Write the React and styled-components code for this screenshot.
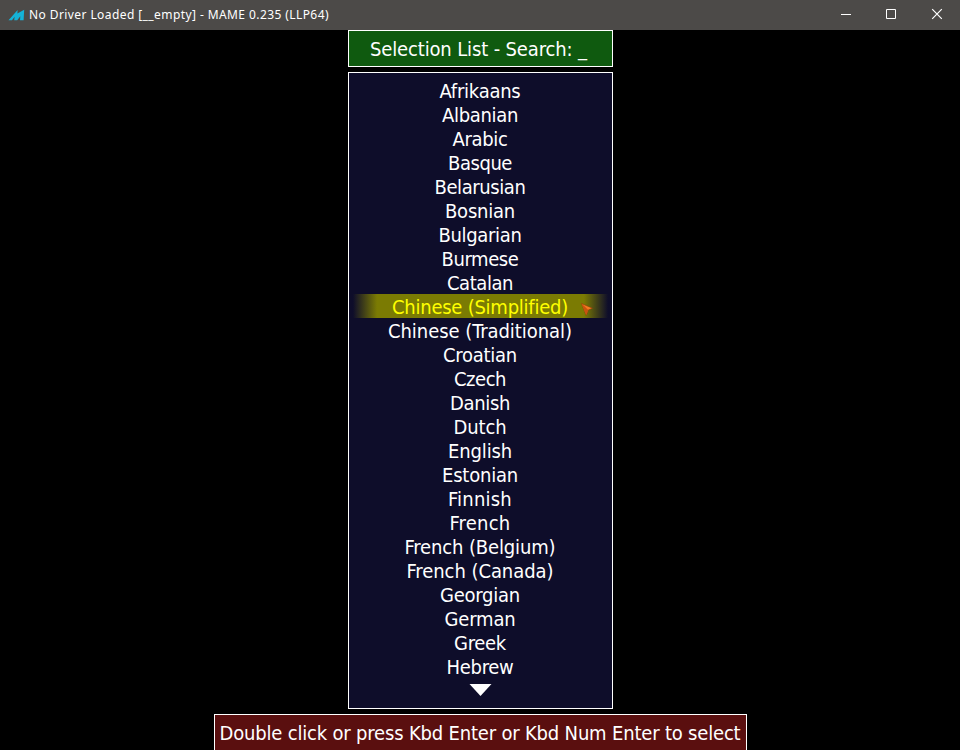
import React, { useLayoutEffect, useRef, useState } from "react";
import styled, { createGlobalStyle } from "styled-components";

const GlobalStyle = createGlobalStyle`
  html, body { margin: 0; padding: 0; background: #000; overflow: hidden; }
  * { box-sizing: border-box; }
`;

const Window = styled.div`
  width: 960px;
  height: 750px;
  background: #000;
  display: flex;
  flex-direction: column;
  overflow: hidden;
  color: #fff;
  font-family: "DejaVu Sans Condensed", "DejaVu Sans", sans-serif;
  font-size: 20px;
  line-height: 24px;
`;

const TitleBar = styled.header`
  height: 30px;
  flex: none;
  display: flex;
  align-items: center;
  background: #4c4a48;
  padding-left: 8px;
`;

const Logo = styled.svg`
  width: 17px;
  height: 14px;
  margin-right: 4px;
  flex: none;
`;

const Title = styled.div`
  flex: 1;
  display: flex;
  font-family: "Noto Sans", "Open Sans", sans-serif;
  font-size: 12px;
  line-height: 30px;
  height: 30px;
`;

const Controls = styled.div`
  display: flex;
`;

const ControlButton = styled.button`
  width: 46px;
  height: 30px;
  padding: 0;
  border: 0;
  background: transparent;
  display: block;
  svg { display: block; }
`;

const Screen = styled.main`
  flex: 1;
  display: flex;
  flex-direction: column;
  align-items: center;
`;

const SearchBox = styled.div`
  width: 265px;
  height: 37px;
  flex: none;
  border: 1px solid #fff;
  background: #0f5a0f;
  display: flex;
  justify-content: center;
  padding-top: 6px;
`;

const ListBox = styled.div`
  width: 265px;
  height: 637px;
  flex: none;
  margin-top: 5px;
  border: 1px solid #fff;
  background: #0e0d2a;
  padding-top: 5px;
  display: flex;
  flex-direction: column;
`;

const Row = styled.div`
  height: 24px;
  flex: none;
  margin: 0 4px;
  display: flex;
  justify-content: center;
  position: relative;
  line-height: 26px;
  color: ${(p) => (p.$selected ? "#ffff00" : "#ffffff")};
  background: ${(p) =>
    p.$selected
      ? "linear-gradient(90deg, rgba(123,123,3,0) 0, #7b7b03 24px, #7b7b03 calc(100% - 24px), rgba(123,123,3,0) 100%)"
      : "none"};
`;

const Pointer = styled.svg`
  position: absolute;
  left: 228px;
  top: 9px;
  width: 12px;
  height: 13px;
`;

const MoreArrow = styled.svg`
  width: 23px;
  height: 12px;
  margin: 6px auto 0;
  display: block;
`;

const HintBox = styled.div`
  width: 533px;
  height: 37px;
  flex: none;
  margin-top: 5px;
  border: 1px solid #fff;
  border-bottom: 0;
  background: #5a0f0f;
  display: flex;
  justify-content: center;
  padding-top: 6px;
`;

const Label = styled.span`
  white-space: pre;
  display: block;
  flex: none;
`;

// Tracks the letters out or in so that the label fills its given width.
function FitLabel({ width, children }) {
  const ref = useRef(null);
  const [spacing, setSpacing] = useState(0);
  useLayoutEffect(() => {
    const el = ref.current;
    el.style.letterSpacing = "0.001px";
    const natural = el.getBoundingClientRect().width;
    const next = (width - natural) / children.length;
    el.style.letterSpacing = `${next}px`;
    setSpacing(next);
  }, [width, children]);
  return (
    <Label ref={ref} style={{ letterSpacing: `${spacing}px` }}>
      {children}
    </Label>
  );
}

const LANGUAGES = [
  ["Afrikaans", 81],
  ["Albanian", 76],
  ["Arabic", 55],
  ["Basque", 64],
  ["Belarusian", 91],
  ["Bosnian", 70],
  ["Bulgarian", 83],
  ["Burmese", 77],
  ["Catalan", 66],
  ["Chinese (Simplified)", 176],
  ["Chinese (Traditional)", 184],
  ["Croatian", 74],
  ["Czech", 52],
  ["Danish", 60],
  ["Dutch", 53],
  ["English", 64],
  ["Estonian", 76],
  ["Finnish", 64],
  ["French", 61],
  ["French (Belgium)", 151],
  ["French (Canada)", 147],
  ["Georgian", 80],
  ["German", 71],
  ["Greek", 52],
  ["Hebrew", 67],
];

export default function App() {
  return (
    <Window>
      <GlobalStyle />
      <TitleBar>
        <Logo viewBox="0 0 17 14">
          <path d="M0.5 12.3 L9.6 2 L9.4 5.4 L16.2 1.8 L15.6 12.3 H12 L12.3 8.2 L9.2 12.3 H6.2 L6.6 8.8 L4 12.3 Z" fill="#14b2d8" />
        </Logo>
        <Title>
          <FitLabel width={300}>No Driver Loaded [__empty] - MAME 0.235 (LLP64)</FitLabel>
        </Title>
        <Controls>
          <ControlButton aria-label="Minimize">
            <svg width="46" height="30"><path d="M19 14.5h10" stroke="#fff" /></svg>
          </ControlButton>
          <ControlButton aria-label="Maximize">
            <svg width="46" height="30"><path d="M18.5 9.5h9v9h-9z" stroke="#fff" fill="none" /></svg>
          </ControlButton>
          <ControlButton aria-label="Close">
            <svg width="46" height="30"><path d="M18.2 9.2l9.6 9.6M27.8 9.2l-9.6 9.6" stroke="#fff" strokeWidth="1.2" /></svg>
          </ControlButton>
        </Controls>
      </TitleBar>
      <Screen>
        <SearchBox>
          <FitLabel width={208}>{"Selection List - Search: "}</FitLabel>
          <FitLabel width={12}>_</FitLabel>
        </SearchBox>
        <ListBox>
          {LANGUAGES.map(([name, width]) => {
            const selected = name === "Chinese (Simplified)";
            return (
              <Row key={name} $selected={selected}>
                <FitLabel width={width}>{name}</FitLabel>
                {selected && (
                  <Pointer viewBox="0 0 12 13">
                    <path d="M0.5 0.5 L11.5 5.2 L7.3 7 L5.2 12.3 Z" fill="#f47a20" stroke="#8a3d0c" strokeWidth="0.6" />
                    <path d="M0.5 0.5 L7.3 7 L5.2 12.3 Z" fill="#c9530f" />
                  </Pointer>
                )}
              </Row>
            );
          })}
          <MoreArrow viewBox="0 0 23 12">
            <path d="M0.5 0H22.5L11.5 12Z" fill="#fff" />
          </MoreArrow>
        </ListBox>
        <HintBox>
          <FitLabel width={521}>Double click or press Kbd Enter or Kbd Num Enter to select</FitLabel>
        </HintBox>
      </Screen>
    </Window>
  );
}
